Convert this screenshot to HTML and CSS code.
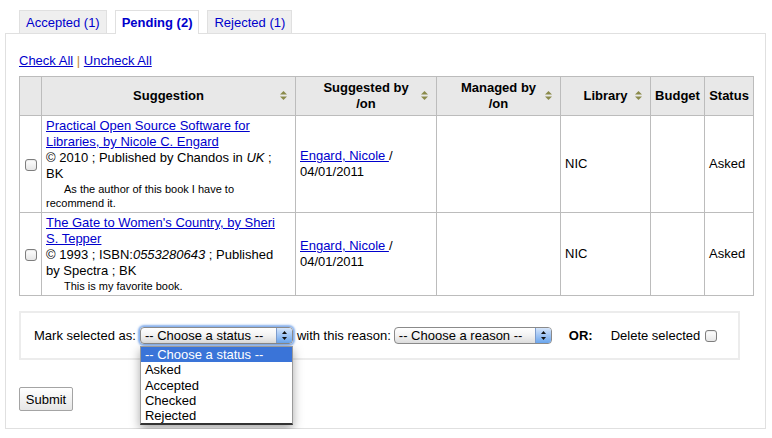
FILE: index.html
```html
<!DOCTYPE html>
<html>
<head>
<meta charset="utf-8">
<link rel="stylesheet" href="styles.css">
</head>
<body>
<div class="page">
  <ul class="tabs">
    <li class="tab"><a href="#">Accepted (1)</a></li>
    <li class="tab active"><a href="#">Pending (2)</a></li>
    <li class="tab"><a href="#">Rejected (1)</a></li>
  </ul>
  <div class="panel">
    <p class="checks"><a href="#">Check All</a> <span class="sep">|</span> <a href="#">Uncheck All</a></p>
    <table class="grid">
      <colgroup>
        <col style="width:22px"><col style="width:254px"><col style="width:141px"><col style="width:124px"><col style="width:90px"><col style="width:54px"><col style="width:49px">
      </colgroup>
      <thead>
        <tr>
          <th class="plain"></th>
          <th class="sort">Suggestion<svg class="arrows" viewBox="0 0 7 9" width="7" height="9"><path d="M3.5 0L7 3.6H0Z"/><path d="M0 5.4H7L3.5 9Z"/></svg></th>
          <th class="sort">Suggested by<br>/on<svg class="arrows" viewBox="0 0 7 9" width="7" height="9"><path d="M3.5 0L7 3.6H0Z"/><path d="M0 5.4H7L3.5 9Z"/></svg></th>
          <th class="sort">Managed by<br>/on<svg class="arrows" viewBox="0 0 7 9" width="7" height="9"><path d="M3.5 0L7 3.6H0Z"/><path d="M0 5.4H7L3.5 9Z"/></svg></th>
          <th class="sort">Library<svg class="arrows" viewBox="0 0 7 9" width="7" height="9"><path d="M3.5 0L7 3.6H0Z"/><path d="M0 5.4H7L3.5 9Z"/></svg></th>
          <th class="plain">Budget</th>
          <th class="plain">Status</th>
        </tr>
      </thead>
      <tbody>
        <tr>
          <td class="chk"><input type="checkbox" class="box"></td>
          <td class="sugg"><a href="#">Practical Open Source Software for Libraries, by Nicole C. Engard</a><br>© 2010 ; Published by Chandos in <i>UK</i> ; BK<div class="note">As the author of this book I have to recommend it.</div></td>
          <td><a href="#">Engard, Nicole </a>/<br>04/01/2011</td>
          <td></td>
          <td>NIC</td>
          <td></td>
          <td>Asked</td>
        </tr>
        <tr>
          <td class="chk"><input type="checkbox" class="box"></td>
          <td class="sugg"><a href="#">The Gate to Women's Country, by Sheri S. Tepper</a><br>© 1993 ; ISBN:<i>0553280643</i> ; Published by Spectra ; BK<div class="note">This is my favorite book.</div></td>
          <td><a href="#">Engard, Nicole </a>/<br>04/01/2011</td>
          <td></td>
          <td>NIC</td>
          <td></td>
          <td>Asked</td>
        </tr>
      </tbody>
    </table>
    <div class="actions">
      <span class="lbl">Mark selected as:</span>
      <span class="dd-wrap">
        <span class="select focus status"><span class="sel-text">-- Choose a status --</span><span class="stepper"><svg viewBox="0 0 5 9" width="5" height="9"><path d="M2.5 0L5 3H0Z"/><path d="M0 6H5L2.5 9Z"/></svg></span></span>
        <ul class="menu">
          <li class="hl">-- Choose a status --</li>
          <li>Asked</li>
          <li>Accepted</li>
          <li>Checked</li>
          <li>Rejected</li>
        </ul>
      </span>
      <span class="lbl mid">with this reason:</span>
      <span class="select reason"><span class="sel-text">-- Choose a reason --</span><span class="stepper"><svg viewBox="0 0 5 9" width="5" height="9"><path d="M2.5 0L5 3H0Z"/><path d="M0 6H5L2.5 9Z"/></svg></span></span>
      <b class="or">OR:</b>
      <span class="lbl">Delete selected</span>
      <input type="checkbox" class="box del">
    </div>
    <button class="submit">Submit</button>
  </div>
</div>
</body>
</html>
```

FILE: styles.css
```css
* { box-sizing: border-box; }
body {
  margin: 0;
  font-family: "Liberation Sans", Arial, sans-serif;
  font-size: 13px;
  line-height: 16px;
  color: #000;
  background: #fff;
}
a { color: #0000cc; }
.page { padding: 10px 6px 0 5px; }

.tabs {
  list-style: none;
  margin: 0;
  padding: 0 0 0 14px;
  display: flex;
  gap: 8px;
  position: relative;
  z-index: 2;
}
.tab {
  height: 23px;
  padding: 4px 6px 0;
  background: #efefef;
  border: 1px solid #e0e0e0;
  border-bottom: none;
}
.tab a { text-decoration: none; color: #0000cc; }
.tab.active {
  background: #fff;
  height: 24px;
  margin-bottom: -1px;
}
.tab.active a { font-weight: bold; }

.panel {
  border: 1px solid #e0e0e0;
  padding: 19px 13px 17px;
  height: 396px;
}
.checks { margin: 0 0 7px; }
.sep { color: #c08830; }

.grid {
  border-collapse: collapse;
  table-layout: fixed;
  width: 735px;
  border: 1px solid #bcbcbc;
}
.grid th, .grid td { border: 1px solid #bcbcbc; }
.grid th {
  background: #e8e8e8;
  font-weight: bold;
  text-align: center;
  padding: 3px 4px;
  position: relative;
  vertical-align: middle;
}
.grid th.sort { padding: 3px 18px; }
.arrows {
  position: absolute;
  right: 8px;
  top: 50%;
  margin-top: -5px;
  fill: #8a8a4a;
}
.grid td {
  padding: 2px 4px;
  vertical-align: middle;
}
.grid td.sugg { padding-right: 12px; }
.grid td.chk { padding: 0 0 0 5px; }
.note {
  font-size: 11px;
  line-height: 14px;
  text-indent: 18px;
}

.box {
  -webkit-appearance: none;
  appearance: none;
  width: 12px;
  height: 12px;
  margin: 0;
  border: 1px solid #7e7e7e;
  border-radius: 3px;
  background: linear-gradient(#ffffff, #e6e6e6);
  box-shadow: inset 0 1px 1px rgba(0,0,0,0.08);
  vertical-align: middle;
}

.actions {
  margin-top: 15px;
  width: 721px;
  height: 49px;
  border: 2px solid #ececec;
  display: flex;
  align-items: center;
  padding: 0 13px;
}
.lbl { white-space: nowrap; }
.mid { margin: 0 3px 0 4px; }
.dd-wrap { position: relative; margin-left: 4px; display: inline-flex; }
.select {
  display: inline-flex;
  align-items: stretch;
  height: 17px;
  border: 1px solid #8a8a8a;
  border-radius: 4px;
  background: linear-gradient(#ffffff, #f2f2f2 50%, #dcdcdc);
  overflow: hidden;
  line-height: 15px;
}
.select.status { width: 153px; }
.select.reason { width: 158px; }
.select.focus { box-shadow: 0 0 2px 2px rgba(95,150,230,0.75); }
.sel-text {
  flex: 1;
  padding-left: 4px;
  white-space: nowrap;
  overflow: hidden;
}
.stepper {
  width: 16px;
  border-left: 1px solid #7d9ccc;
  background: linear-gradient(#d6e6fb, #9fc4f4 50%, #6aa6ee);
  display: flex;
  align-items: center;
  justify-content: center;
}
.stepper svg { fill: #111; }
.or { margin: 0 18px 0 17px; }
.del { margin-left: 5px; }

.menu {
  position: absolute;
  left: 0;
  top: 19px;
  width: 153px;
  margin: 0;
  padding: 0;
  list-style: none;
  background: #fff;
  border: 1px solid #9a9a9a;
  border-bottom: 2px solid #333;
  box-shadow: 0 4px 10px rgba(0,0,0,0.35);
  z-index: 5;
}
.menu li {
  height: 15.3px;
  line-height: 15px;
  padding-left: 4px;
  white-space: nowrap;
}
.menu li.hl { background: #3a74d8; color: #fff; }

.submit {
  margin-top: 27px;
  width: 54px;
  height: 24px;
  padding: 0;
  font-family: "Liberation Sans", Arial, sans-serif;
  font-size: 13px;
  color: #000;
  border: 1px solid #a4a4a4;
  border-radius: 2px;
  background: linear-gradient(#ffffff, #e6e6e6);
  display: block;
}
```
